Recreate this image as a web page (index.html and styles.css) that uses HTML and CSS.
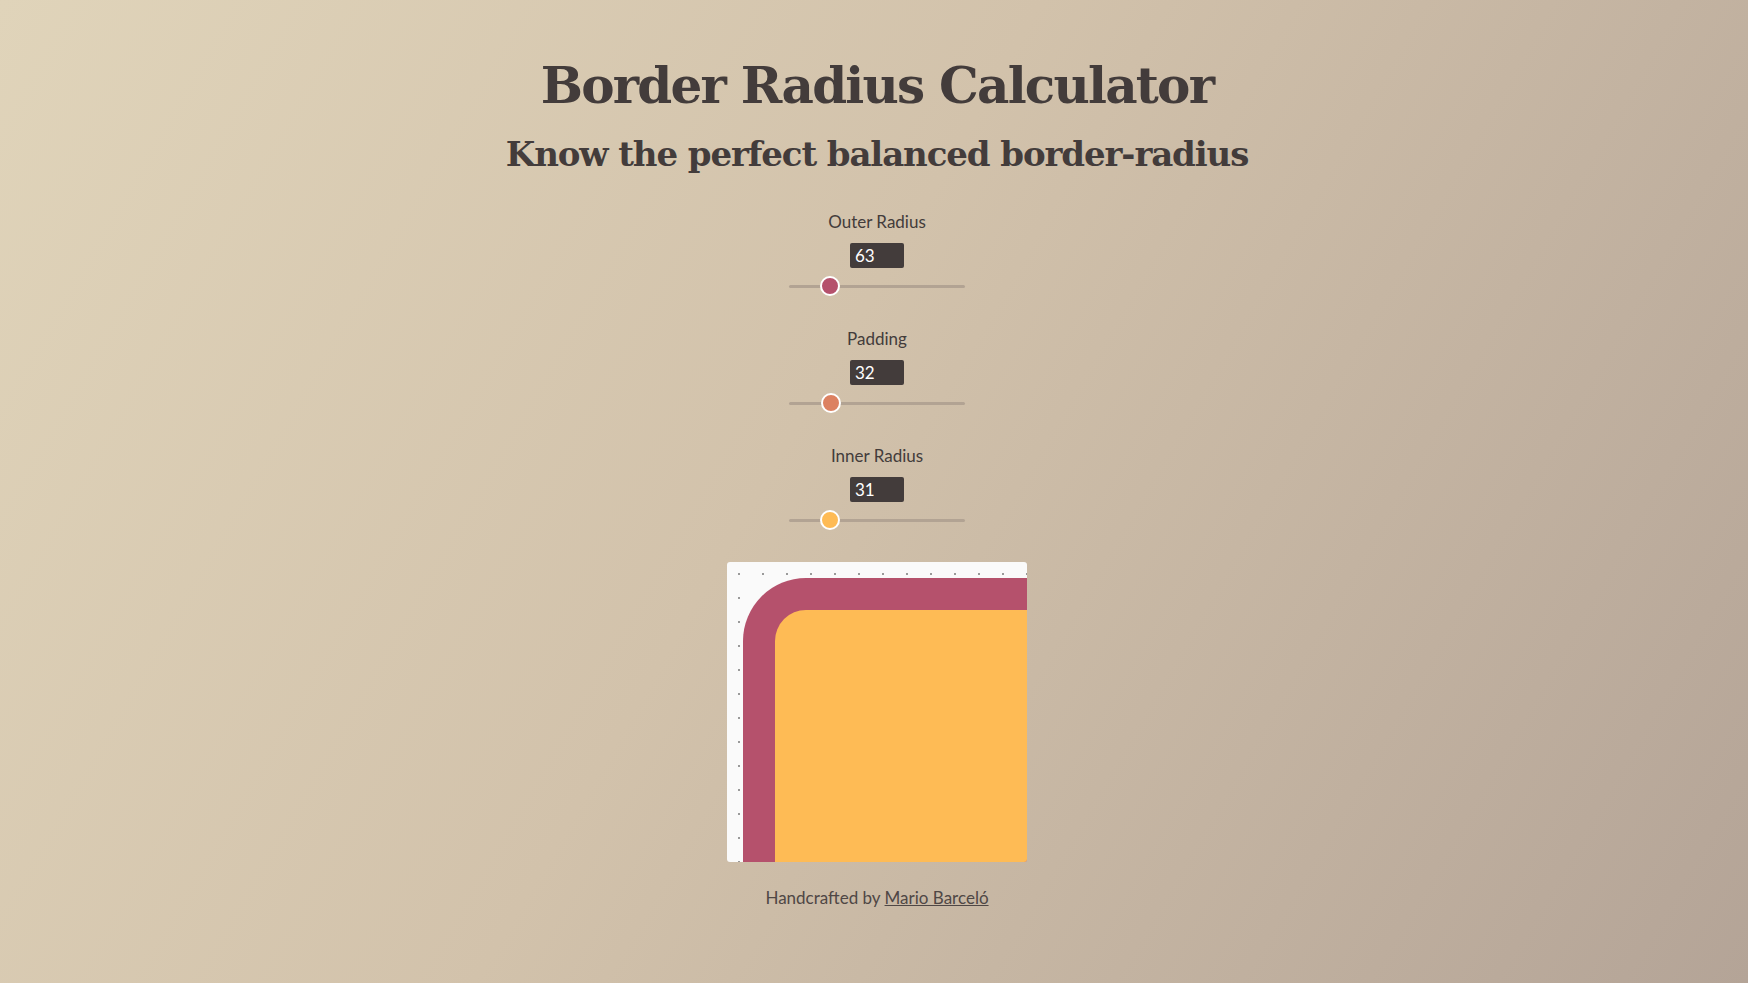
FILE: index.html
```html
<!DOCTYPE html>
<html lang="en">
<head>
<meta charset="utf-8">
<title>Border Radius Calculator</title>
<link rel="stylesheet" href="styles.css">
</head>
<body>
<main class="page">
  <h1 class="title">Border Radius Calculator</h1>
  <h2 class="subtitle">Know the perfect balanced border-radius</h2>

  <section class="controls">
    <div class="control">
      <label class="control-label" for="outer">Outer Radius</label>
      <input class="control-value" type="text" value="63" id="outer">
      <input class="slider slider-outer" type="range" min="0" max="320" value="63">
    </div>
    <div class="control">
      <label class="control-label" for="padding">Padding</label>
      <input class="control-value" type="text" value="32" id="padding">
      <input class="slider slider-padding" type="range" min="0" max="156" value="32">
    </div>
    <div class="control">
      <label class="control-label" for="inner">Inner Radius</label>
      <input class="control-value" type="text" value="31" id="inner">
      <input class="slider slider-inner" type="range" min="0" max="156" value="31">
    </div>
  </section>

  <div class="preview">
    <div class="outer">
      <div class="inner"></div>
    </div>
  </div>

  <footer class="footer">Handcrafted by <a href="#" class="footer-link">Mario Barceló</a></footer>
</main>
</body>
</html>
```
FILE: styles.css
```css
* { box-sizing: border-box; }

html, body {
  margin: 0;
  padding: 0;
}

body {
  min-height: 100vh;
  background: linear-gradient(120deg, #e0d4ba 0%, #d2c2ab 45%, #b4a497 100%);
  color: #433c3b;
  font-family: "Lato", "Open Sans", sans-serif;
}

.page {
  display: flex;
  flex-direction: column;
  align-items: center;
  padding: 53px 0 0 6px;
}

.title {
  margin: 0;
  font-family: "DejaVu Serif", serif;
  font-weight: 700;
  font-size: 50px;
  line-height: 66px;
  letter-spacing: -1.8px;
  color: #433c3b;
}

.subtitle {
  margin: 12px 0 0;
  font-family: "DejaVu Serif", serif;
  font-weight: 700;
  font-size: 34px;
  line-height: 46px;
  letter-spacing: -1.1px;
  color: #433c3b;
}

.controls {
  display: flex;
  flex-direction: column;
  align-items: center;
  gap: 31px;
  margin-top: 33px;
}

.control {
  display: flex;
  flex-direction: column;
  align-items: center;
}

.control-label {
  font-size: 17px;
  line-height: 24px;
  color: #433c3b;
}

.control-value {
  margin-top: 9px;
  width: 54px;
  height: 25px;
  border: none;
  border-radius: 2px;
  background: #433c3b;
  color: #ffffff;
  font-family: "Lato", "Open Sans", sans-serif;
  font-size: 17px;
  padding: 0 0 0 5px;
  outline: none;
}

.slider {
  -webkit-appearance: none;
  appearance: none;
  width: 176px;
  height: 20px;
  margin: 8px 0 0;
  background: transparent;
}

.slider::-webkit-slider-runnable-track {
  height: 3px;
  background: #b2a393;
  border-radius: 2px;
}

.slider::-webkit-slider-thumb {
  -webkit-appearance: none;
  appearance: none;
  width: 20px;
  height: 20px;
  margin-top: -8.5px;
  border-radius: 50%;
  border: 2px solid #ffffff;
  background: #b5516c;
}

.slider-padding::-webkit-slider-thumb { background: #dc8161; }
.slider-inner::-webkit-slider-thumb { background: #febb55; }

.preview {
  margin-top: 32px;
  width: 300px;
  height: 300px;
  border-radius: 3px;
  overflow: hidden;
  padding: 16px 0 0 16px;
  background-color: #fafafa;
  background-image: radial-gradient(circle at center, #9a9a9a 0, #9a9a9a 1px, transparent 1.5px);
  background-size: 24px 24px;
}

.outer {
  width: 400px;
  height: 400px;
  padding: 32px 0 0 32px;
  background: #b5516c;
  border-top-left-radius: 63px;
}

.inner {
  width: 100%;
  height: 100%;
  background: #febb55;
  border-top-left-radius: 31px;
}

.footer {
  margin-top: 24px;
  font-size: 17px;
  line-height: 24px;
  color: #4f4745;
}

.footer-link {
  color: #4f4745;
  text-decoration: underline;
}
```
